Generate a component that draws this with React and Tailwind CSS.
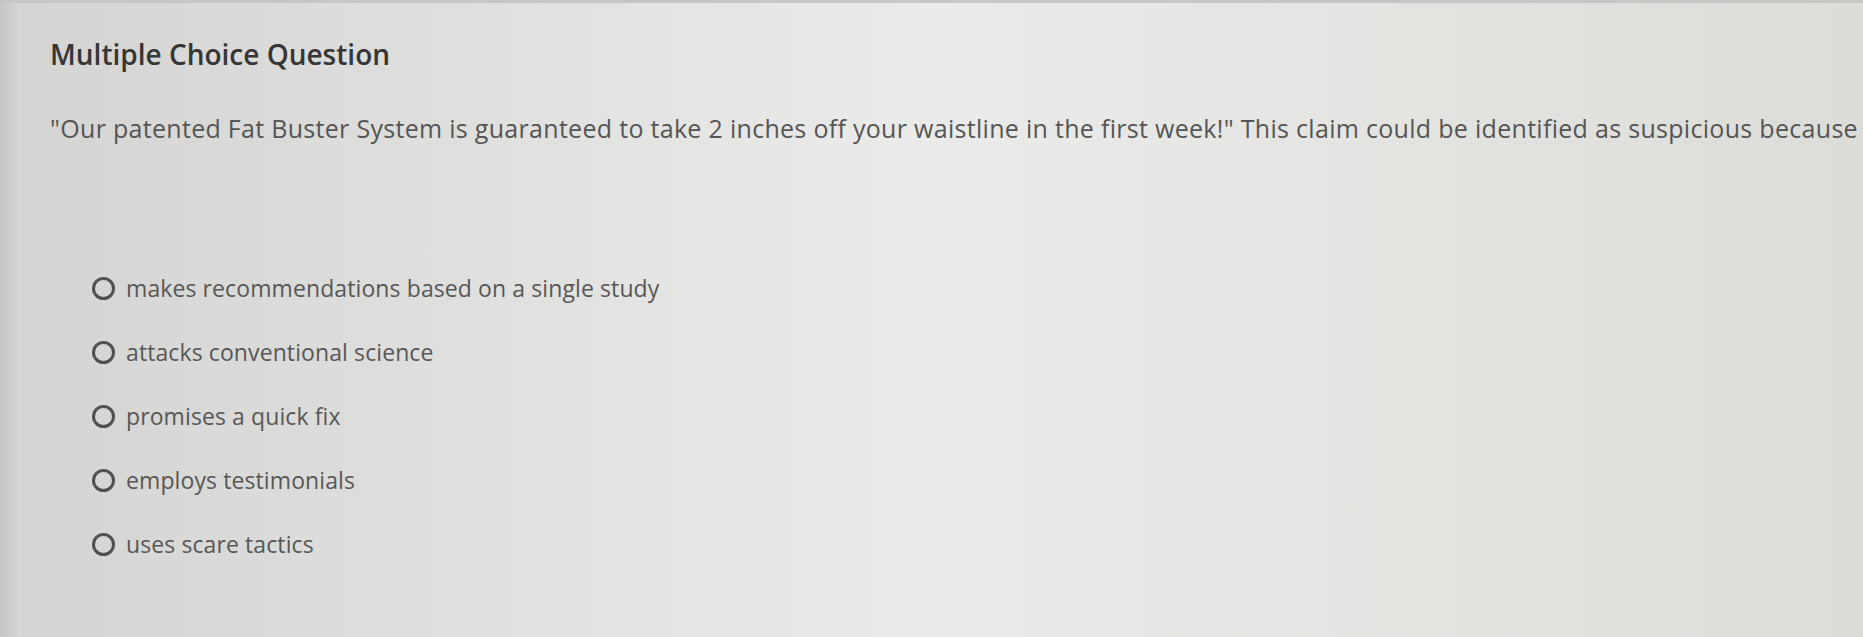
import { useState } from "react";

const options = [
  "makes recommendations based on a single study",
  "attacks conventional science",
  "promises a quick fix",
  "employs testimonials",
  "uses scare tactics",
];

export default function App() {
  const [picked, setPicked] = useState(null);

  return (
    <div
      className="h-screen w-full overflow-hidden bg-linear-to-r from-[#d4d4d2] via-[#ebebe9] to-[#dcddd9] text-[#4a4a4a]"
      style={{ fontFamily: "'Open Sans', Lato, sans-serif" }}
    >
      {/* top edge of the card */}
      <div className="h-[3px] w-full bg-[#c6c6c4]" />
      <div className="flex h-full">
        <div className="w-[18px] shrink-0 bg-linear-to-r from-[#c6c6c4] to-[#d4d4d2]" />
        <div className="flex-1 pl-[32px] pt-[34px]">
          <h2 className="text-[28px] font-semibold leading-[34px] text-[#363636]">
            Multiple Choice Question
          </h2>
          <p className="mt-[42px] whitespace-nowrap text-[25px] leading-[30px] tracking-[0.3px] text-[#555]">
            "Our patented Fat Buster System is guaranteed to take 2 inches off your waistline in the first week!" This claim could be identified as suspicious because
          </p>

          <ul className="mt-[131px] flex flex-col gap-[35px] pl-[42px]">
            {options.map((opt, i) => (
              <li key={opt}>
                <label className="flex cursor-pointer items-center gap-[11px]">
                  <span className="flex h-[23px] w-[23px] shrink-0 items-center justify-center rounded-full border-[3px] border-[#505050] bg-transparent">
                    {picked === i && <span className="h-[10px] w-[10px] rounded-full bg-[#505050]" />}
                  </span>
                  <input
                    type="radio"
                    name="answer"
                    className="sr-only"
                    checked={picked === i}
                    onChange={() => setPicked(i)}
                  />
                  <span className="text-[23px] leading-[29px] tracking-[0.1px] text-[#575757]">{opt}</span>
                </label>
              </li>
            ))}
          </ul>
        </div>
      </div>
    </div>
  );
}
